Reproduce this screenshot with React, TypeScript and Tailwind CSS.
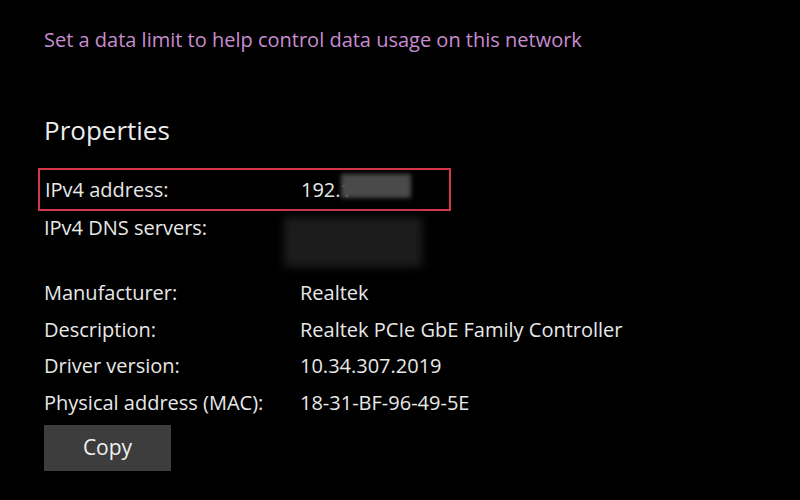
import React from "react"

const font = { fontFamily: '"Open Sans", "Noto Sans", sans-serif' }

const details = [
  { label: "Manufacturer:", value: "Realtek" },
  { label: "Description:", value: "Realtek PCIe GbE Family Controller" },
  { label: "Driver version:", value: "10.34.307.2019" },
  { label: "Physical address (MAC):", value: "18-31-BF-96-49-5E" },
]

function Row({ label, h, children }: { label: string; h: string; children?: React.ReactNode }) {
  return (
    <div className={`flex items-center text-[20px] text-[#e8e8e8] ${h}`}>
      <div className="w-[256px] shrink-0">{label}</div>
      <div className="relative flex items-center">{children}</div>
    </div>
  )
}

export default function App() {
  return (
    <div className="h-[500px] w-[800px] overflow-hidden bg-black pl-[44px] pt-[26px]" style={font}>
      <div className="h-[28px] text-[20px] leading-[28px] text-[#c88cd2]">
        Set a data limit to help control data usage on this network
      </div>

      <div className="mt-[58px] h-[36px] text-[26px] leading-[36px] text-[#ececec]">Properties</div>

      {/* highlighted row */}
      <div className="-ml-[6px] mt-[20px] flex h-[43px] w-[413px] items-center border-2 border-[#d4364a] pl-[5px]">
        <Row label="IPv4 address:" h="h-[37px]">
          <span>192.1</span>
          <span className="absolute left-[40px] top-[-1px] h-[24px] w-[70px] bg-[#4a4a4a] blur-[2px]" />
        </Row>
      </div>

      <Row label="IPv4 DNS servers:" h="h-[34px]">
        <span className="absolute left-[-16px] top-[-11px] h-[50px] w-[138px] bg-[#1c1c1c] blur-[4px]" />
      </Row>
      <div className="h-[30px]" />

      <div>
        {details.map((d) => (
          <Row key={d.label} label={d.label} h="h-[36.5px]">
            {d.value}
          </Row>
        ))}
      </div>

      <button className="mt-[4px] flex h-[46px] w-[127px] items-center justify-center bg-[#3d3d3d] text-[21px] text-[#f0f0f0]">
        Copy
      </button>
    </div>
  )
}
